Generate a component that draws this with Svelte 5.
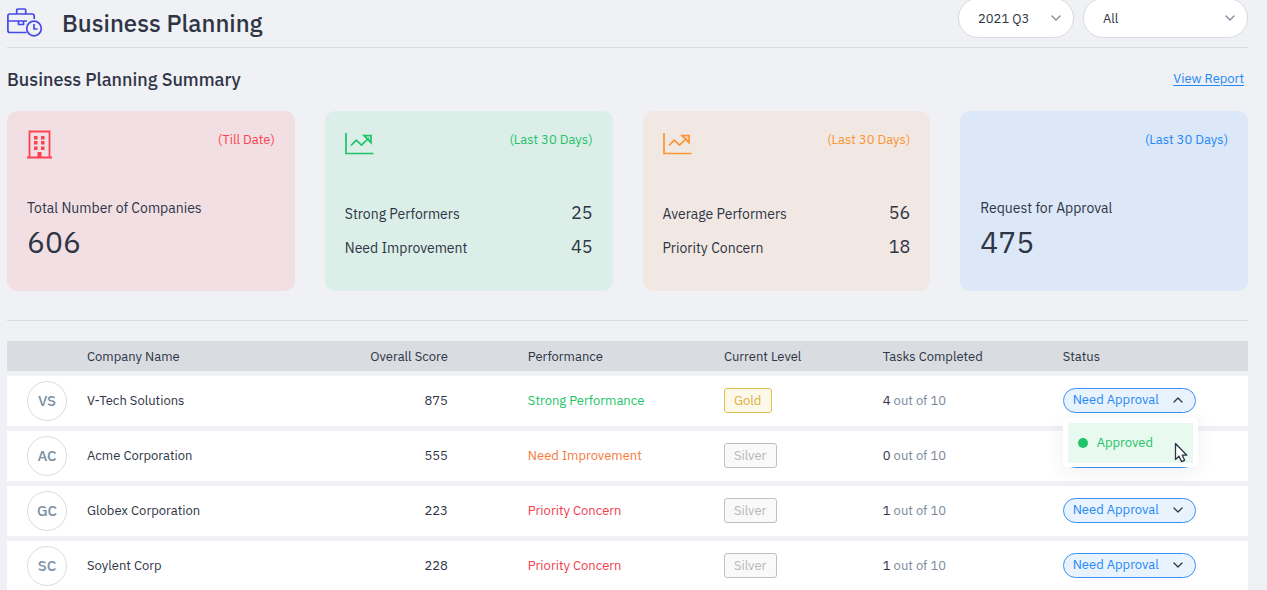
<script lang="ts">
  type Card = {
    tone: string;
    icon?: 'building' | 'chart';
    period: string;
    total?: { label: string; value: number };
    rows?: { label: string; value: number }[];
  };

  const cards: Card[] = [
    { tone: 'red', icon: 'building', period: 'Till Date', total: { label: 'Total Number of Companies', value: 606 } },
    {
      tone: 'green',
      icon: 'chart',
      period: 'Last 30 Days',
      rows: [
        { label: 'Strong Performers', value: 25 },
        { label: 'Need Improvement', value: 45 },
      ],
    },
    {
      tone: 'orange',
      icon: 'chart',
      period: 'Last 30 Days',
      rows: [
        { label: 'Average Performers', value: 56 },
        { label: 'Priority Concern', value: 18 },
      ],
    },
    { tone: 'blue', period: 'Last 30 Days', total: { label: 'Request for Approval', value: 475 } },
  ];

  let companies = $state([
    { initials: 'VS', name: 'V-Tech Solutions', score: 875, performance: 'Strong Performance', level: 'Gold', done: 4, status: 'Need Approval' },
    { initials: 'AC', name: 'Acme Corporation', score: 555, performance: 'Need Improvement', level: 'Silver', done: 0, status: 'Need Approval' },
    { initials: 'GC', name: 'Globex Corporation', score: 223, performance: 'Priority Concern', level: 'Silver', done: 1, status: 'Need Approval' },
    { initials: 'SC', name: 'Soylent Corp', score: 228, performance: 'Priority Concern', level: 'Silver', done: 1, status: 'Need Approval' },
  ]);

  const performanceClass: Record<string, string> = {
    'Strong Performance': 'strong',
    'Need Improvement': 'improve',
    'Priority Concern': 'concern',
  };

  let quarter = $state('2021 Q3');
  let filter = $state('All');
  let openRow = $state(0);

  function toggle(i: number) {
    openRow = openRow === i ? -1 : i;
  }

  function approve(i: number) {
    companies[i].status = 'Approved';
    openRow = -1;
  }
</script>

{#snippet chevron(up: boolean)}
  <svg class="chevron" class:up width="10" height="6" viewBox="0 0 10 6" aria-hidden="true">
    <path d="M1 1l4 4 4-4" fill="none" stroke="currentColor" stroke-width="1.3" stroke-linecap="round" stroke-linejoin="round" />
  </svg>
{/snippet}

<main>
  <header>
    <div class="title">
      <svg width="36" height="30" viewBox="0 0 36 30" fill="none" stroke="#4548e8" stroke-width="1.7" stroke-linejoin="round" aria-hidden="true">
        <path d="M9.700 6V2Q9.700 1 10.700 1H17.700Q18.700 1 18.700 2V6" />
        <path d="M27.200 11V8Q27.200 6 25.200 6H2.900Q.9 6 .9 8V22.500Q.9 24.500 2.900 24.500H19.500" />
        <path d="M.9 13H20M11.500 13V16.500H16.500V13" />
        <circle cx="27" cy="20.500" r="7.300" />
        <path d="M27 16V21H30.500" />
      </svg>
      <h1>Business Planning</h1>
    </div>
    <div class="filters">
      <label class="picker quarter">
        <select bind:value={quarter} aria-label="Quarter">
          <option>2021 Q3</option>
          <option>2021 Q2</option>
        </select>
        {@render chevron(false)}
      </label>
      <label class="picker scope">
        <select bind:value={filter} aria-label="Companies">
          <option>All</option>
          <option>Gold</option>
          <option>Silver</option>
        </select>
        {@render chevron(false)}
      </label>
    </div>
  </header>

  <section class="summary">
    <div class="summary-head">
      <h2>Business Planning Summary</h2>
      <a href="#report">View Report</a>
    </div>

    <div class="cards">
      {#each cards as card}
        <article class="card {card.tone}">
          <div class="card-top">
            {#if card.icon === 'building'}
              <svg width="25" height="29" viewBox="0 0 25 29" aria-hidden="true">
                <path d="M2.500 27.500V1.500H22.500V27.500M0 27.500H25" fill="none" stroke="currentColor" stroke-width="1.8" />
                <path d="M7 6h3.500v3.500H7zM14 6h3.500v3.500H14zM7 11h3.500v3.500H7zM14 11h3.500v3.500H14zM7 16.500h3.500V20H7zM14 16.500h3.500V20H14zM10.500 22h4v5.500h-4z" fill="currentColor" />
              </svg>
            {:else if card.icon === 'chart'}
              <svg class="chart" width="29" height="22" viewBox="0 0 29 22" fill="none" stroke="currentColor" stroke-width="1.7" aria-hidden="true">
                <path d="M1 0V20.500H28.500" />
                <path d="M6 12.500L11.200 7.200L16.500 12.200L24 5" />
                <path d="M19 2.700H26V9.700Z" />
              </svg>
            {/if}
            <span class="period">({card.period})</span>
          </div>
          {#if card.total}
            <p class="label">{card.total.label}</p>
            <p class="total">{card.total.value}</p>
          {:else if card.rows}
            <dl>
              {#each card.rows as row}
                <div>
                  <dt>{row.label}</dt>
                  <dd>{row.value}</dd>
                </div>
              {/each}
            </dl>
          {/if}
        </article>
      {/each}
    </div>
  </section>

  <table>
    <colgroup>
      <col class="c-avatar" />
      <col class="c-name" />
      <col class="c-score" />
      <col class="c-performance" />
      <col class="c-level" />
      <col class="c-tasks" />
      <col />
    </colgroup>
    <thead>
      <tr>
        <th></th>
        <th class="name">Company Name</th>
        <th class="score">Overall Score</th>
        <th>Performance</th>
        <th>Current Level</th>
        <th>Tasks Completed</th>
        <th>Status</th>
      </tr>
    </thead>
    <tbody>
      {#each companies as company, i}
        <tr>
          <td class="avatar-cell"><span class="avatar">{company.initials}</span></td>
          <td class="name">{company.name}</td>
          <td class="score">{company.score}</td>
          <td class={performanceClass[company.performance]}>{company.performance}</td>
          <td class="boxed"><span class="badge {company.level.toLowerCase()}">{company.level}</span></td>
          <td class="tasks"><b>{company.done}</b> out of 10</td>
          <td class="boxed">
            <div class="status">
              <button class="pill" type="button" aria-haspopup="menu" aria-expanded={openRow === i} onclick={() => toggle(i)}>
                {company.status}
                {@render chevron(openRow === i)}
              </button>
              {#if openRow === i}
                <div class="menu" role="menu">
                  <button type="button" role="menuitem" onclick={() => approve(i)}>
                    <span class="dot"></span>
                    Approved
                  </button>
                  <svg class="cursor" width="14" height="21" viewBox="0 0 14 21" aria-hidden="true">
                    <path d="M1.500 1.500V17.500L5 14.300L7.700 19.600L10.600 18.300L8.300 13.200H12.800Z" fill="#fff" stroke="#2e3545" stroke-width="1.3" stroke-linejoin="round" />
                  </svg>
                </div>
              {/if}
            </div>
          </td>
        </tr>
      {/each}
    </tbody>
  </table>
</main>

<style>
  :global(body) {
    background: #f0f1f5;
    overflow: hidden;
  }

  main {
    margin: -2px 19px 0 7px;
    color: #2e3545;
    font-family: 'IBM Plex Sans', Roboto, sans-serif;
    font-size: 13px;
    line-height: 20px;
  }

  h1, h2, p, dl, dd {
    margin: 0;
  }

  h1, h2 {
    font-weight: 500;
  }

  header {
    display: flex;
    justify-content: space-between;
    padding-bottom: 8px;
    border-bottom: 1px solid #d9dbe0;
  }

  .title {
    display: flex;
    align-items: center;
    gap: 19px;
    padding-top: 9px;
  }

  h1 {
    font-size: 24px;
    line-height: 32px;
  }

  .filters {
    display: flex;
    gap: 9px;
  }

  .picker {
    position: relative;
    color: #7b8a9b;
  }

  .quarter {
    width: 116px;
  }

  .scope {
    width: 165px;
  }

  select {
    appearance: none;
    width: 100%;
    height: 40px;
    padding: 1px 36px 0 19px;
    border: 1px solid #d9dbe0;
    border-radius: 20px;
    background: #fff;
    color: #2e3545;
    font: inherit;
  }

  .picker .chevron {
    position: absolute;
    top: 17px;
    right: 13px;
    pointer-events: none;
  }

  .chevron.up {
    transform: rotate(180deg);
  }

  .summary {
    padding: 21px 0 29px;
    border-bottom: 1px solid #d9dbe0;
  }

  .summary-head {
    display: flex;
    align-items: flex-start;
    justify-content: space-between;
    padding-right: 4px;
  }

  h2 {
    font-size: 18px;
    line-height: 22px;
  }

  a {
    color: #2488f5;
    text-underline-offset: 2px;
  }

  .cards {
    display: grid;
    grid-template-columns: repeat(4, 1fr);
    gap: 30px;
    margin-top: 20px;
  }

  .card {
    box-sizing: border-box;
    min-height: 180px;
    padding: 19px 20px;
    border-radius: 10px;
  }

  .red {
    background: #f2dfe4;
    color: #fc424f;
  }

  .green {
    background: #dbeee7;
    color: #1dc468;
  }

  .orange {
    background: #f2e8e3;
    color: #fb9432;
  }

  .blue {
    background: #dce7f7;
    color: #2488f5;
  }

  .card-top {
    display: flex;
    justify-content: space-between;
    height: 68px;
  }

  .chart {
    margin-top: 3px;
  }

  .period {
    margin-left: auto;
  }

  .label, .total, dl {
    color: #2e3545;
    font-size: 14px;
  }

  .total {
    margin-top: 5px;
    font-size: 30px;
    line-height: 38px;
  }

  dl {
    display: grid;
    gap: 10px;
    padding-top: 3px;
  }

  dl div {
    display: flex;
    align-items: baseline;
    justify-content: space-between;
  }

  dd {
    font-size: 18px;
    line-height: 24px;
  }

  table {
    width: 100%;
    margin-top: 15px;
    border-collapse: separate;
    border-spacing: 0 5px;
    table-layout: fixed;
  }

  .c-avatar {
    width: 80px;
  }

  .c-name {
    width: 21%;
  }

  .c-score {
    width: 11.3%;
  }

  .c-performance {
    width: 15.8%;
  }

  .c-level {
    width: 12.8%;
  }

  .c-tasks {
    width: 14.5%;
  }

  th {
    height: 29px;
    padding: 1px 0 0 40px;
    background: #d9dce1;
    font-weight: 400;
    text-align: left;
  }

  td {
    height: 50px;
    padding: 0 0 0 40px;
    background: #fff;
  }

  th.name, td.name {
    padding-left: 0;
  }

  th.score, td.score {
    padding-left: 0;
    padding-right: 40px;
    text-align: right;
    white-space: nowrap;
  }

  td.avatar-cell {
    padding-left: 20px;
  }

  td.boxed {
    height: 48px;
    padding-bottom: 2px;
  }

  .avatar {
    display: flex;
    align-items: center;
    justify-content: center;
    box-sizing: border-box;
    width: 40px;
    height: 40px;
    border: 1px solid #d9dbe0;
    border-radius: 50%;
    color: #7b8fa3;
    font-size: 15px;
    font-weight: 500;
  }

  .strong {
    color: #1dc468;
  }

  .improve {
    color: #f57a3d;
  }

  .concern {
    color: #f23d4f;
  }

  .badge {
    display: block;
    box-sizing: border-box;
    width: fit-content;
    height: 25px;
    padding: 0 10px 0 9px;
    border: 1px solid;
    border-radius: 3px;
    line-height: 23px;
  }

  .gold {
    border-color: #dfc250;
    background: #fcf8ea;
    color: #d9b23c;
  }

  .silver {
    border-color: #bfbfbf;
    background: #f9f9f9;
    color: #b5b7ba;
  }

  .tasks {
    color: #7b8a9b;
  }

  .tasks b {
    color: #2e3545;
    font-weight: 400;
  }

  .status {
    position: relative;
    width: 133px;
  }

  button {
    display: flex;
    align-items: center;
    width: 100%;
    cursor: pointer;
    font: inherit;
  }

  .pill {
    box-sizing: border-box;
    justify-content: space-between;
    height: 25px;
    padding: 0 12px 0 9px;
    border: 1px solid #3b91f5;
    border-radius: 13px;
    background: #e9f3fe;
    color: #2488f5;
  }

  .pill .chevron {
    color: #2e3545;
  }

  .menu {
    position: absolute;
    top: 30px;
    left: 0;
    z-index: 1;
    width: 125px;
    padding: 5px 5px 4px;
    border-radius: 5px;
    background: #fff;
    box-shadow: 0 4px 20px rgba(46, 53, 69, 0.08);
  }

  .menu button {
    gap: 9px;
    height: 40px;
    padding: 0 10px;
    border: 0;
    background: #e8f9ef;
    color: #1dc468;
  }

  .dot {
    width: 10px;
    height: 10px;
    border-radius: 50%;
    background: #1dc468;
  }

  .cursor {
    position: absolute;
    right: 10px;
    bottom: 4px;
    pointer-events: none;
  }
</style>
